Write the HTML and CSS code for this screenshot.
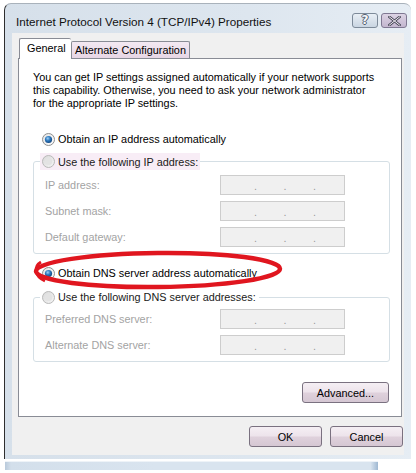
FILE: index.html
```html
<!DOCTYPE html>
<html>
<head>
<meta charset="utf-8">
<link rel="stylesheet" href="styles.css">
</head>
<body>
<svg class="defs" width="0" height="0" aria-hidden="true">
  <defs>
    <linearGradient id="rgOn" x1="0" y1="0" x2="1" y2="1">
      <stop offset="0" stop-color="#e4e4e4"/>
      <stop offset="1" stop-color="#fdfdfd"/>
    </linearGradient>
    <radialGradient id="dotOn" cx="0.4" cy="0.35" r="0.7">
      <stop offset="0" stop-color="#9fd0f5"/>
      <stop offset="0.45" stop-color="#2f7bc0"/>
      <stop offset="1" stop-color="#0d3f78"/>
    </radialGradient>
    <linearGradient id="rgOff" x1="0" y1="0" x2="1" y2="1">
      <stop offset="0" stop-color="#d8d8d8"/>
      <stop offset="1" stop-color="#f6f6f6"/>
    </linearGradient>
  </defs>
</svg>

<div class="window">
  <div class="titlebar">
    <span class="title">Internet Protocol Version 4 (TCP/IPv4) Properties</span>
    <div class="caption-btns">
      <span class="cbtn help">?</span>
      <span class="cbtn close">
        <svg width="13" height="10" viewBox="0 0 13 10"><path d="M1.5 1 L11.5 9 M11.5 1 L1.5 9" stroke="#4a4a5a" stroke-width="2.6" stroke-linecap="square"/><path d="M1.5 1 L11.5 9 M11.5 1 L1.5 9" stroke="#f4f0f6" stroke-width="1" stroke-linecap="square"/></svg>
      </span>
    </div>
  </div>

  <div class="client">
    <div class="tabs">
      <div class="tab active">General</div>
      <div class="tab">Alternate Configuration</div>
    </div>
    <div class="panel">
      <p class="intro">You can get IP settings assigned automatically if your network supports<br>this capability. Otherwise, you need to ask your network administrator<br>for the appropriate IP settings.</p>

      <div class="radio-row first">
        <svg class="radio" width="13" height="13" viewBox="0 0 13 13"><circle cx="6.5" cy="6.5" r="6" fill="url(#rgOn)" stroke="#8e8f8f"/><circle cx="6.5" cy="6.5" r="3.6" fill="url(#dotOn)"/></svg>
        <span>Obtain an IP address automatically</span>
      </div>

      <fieldset class="group ip-group">
        <legend class="radio-row legend hover">
          <svg class="radio" width="13" height="13" viewBox="0 0 13 13"><circle cx="6.5" cy="6.5" r="6" fill="url(#rgOff)" stroke="#b9b9b9"/><circle cx="6.5" cy="6.5" r="3.6" fill="#e3e3e3"/></svg>
          <span>Use the following IP address:</span>
        </legend>
        <div class="field">
          <span class="flabel">IP address:</span>
          <span class="ipbox"><span>.</span><span>.</span><span>.</span></span>
        </div>
        <div class="field">
          <span class="flabel">Subnet mask:</span>
          <span class="ipbox"><span>.</span><span>.</span><span>.</span></span>
        </div>
        <div class="field">
          <span class="flabel">Default gateway:</span>
          <span class="ipbox"><span>.</span><span>.</span><span>.</span></span>
        </div>
      </fieldset>

      <div class="radio-row dns-auto">
        <svg class="radio" width="13" height="13" viewBox="0 0 13 13"><circle cx="6.5" cy="6.5" r="6" fill="url(#rgOn)" stroke="#8e8f8f"/><circle cx="6.5" cy="6.5" r="3.6" fill="url(#dotOn)"/></svg>
        <span>Obtain DNS server address automatically</span>
      </div>

      <fieldset class="group dns-group">
        <legend class="radio-row legend">
          <svg class="radio" width="13" height="13" viewBox="0 0 13 13"><circle cx="6.5" cy="6.5" r="6" fill="url(#rgOff)" stroke="#b9b9b9"/><circle cx="6.5" cy="6.5" r="3.6" fill="#e3e3e3"/></svg>
          <span>Use the following DNS server addresses:</span>
        </legend>
        <div class="field">
          <span class="flabel">Preferred DNS server:</span>
          <span class="ipbox"><span>.</span><span>.</span><span>.</span></span>
        </div>
        <div class="field">
          <span class="flabel">Alternate DNS server:</span>
          <span class="ipbox"><span>.</span><span>.</span><span>.</span></span>
        </div>
      </fieldset>

      <div class="adv-row">
        <button class="btn adv">Advanced...</button>
      </div>
    </div>

    <div class="footer">
      <button class="btn">OK</button>
      <button class="btn">Cancel</button>
    </div>
  </div>
</div>
<div class="strip"></div>

<svg class="annotation" width="416" height="473" viewBox="0 0 416 473" aria-hidden="true">
  <ellipse cx="158" cy="270" rx="122" ry="17" fill="none" stroke="#e0161f" stroke-width="4.5" transform="rotate(-0.6 158 270)"/>
  <path d="M41 262 C 34 266, 34 276, 45 281" fill="none" stroke="#e0161f" stroke-width="3"/>
</svg>
</body>
</html>
```

FILE: styles.css
```css
html, body {
  margin: 0;
  padding: 0;
  background: #ffffff;
}

body {
  font-family: "Liberation Sans", Arial, sans-serif;
  font-size: 10.85px;
  color: #000;
  position: relative;
  width: 416px;
  height: 473px;
  overflow: hidden;
}

.defs {
  position: absolute;
}

.window {
  margin: 3px 0 0 4px;
  width: 392px;
  padding: 0 7px 4px 7px;
  background: linear-gradient(90deg, #d6e0ea 0%, #dde6ef 60%, #e6edf4 100%);
  border-left: 1px solid #2e2e2e;
  border-top: 1px solid #a9b2bb;
  border-radius: 7px 7px 0 0;
}

.titlebar {
  height: 29px;
  box-sizing: border-box;
  display: flex;
  align-items: flex-start;
  justify-content: space-between;
  padding-top: 9px;
}

.title {
  font-size: 11.7px;
  padding-left: 4px;
  margin-top: 2px;
  color: #111;
}

.caption-btns {
  display: flex;
  gap: 3px;
  margin-right: -3px;
}

.cbtn {
  height: 15px;
  width: 26px;
  box-sizing: border-box;
  border: 1px solid #7d8a99;
  border-radius: 3px;
  display: flex;
  align-items: center;
  justify-content: center;
}

.help {
  background: linear-gradient(#e9eff5, #c9d5e2);
  font-family: "DejaVu Sans", sans-serif;
  font-weight: bold;
  font-size: 12px;
  line-height: 13px;
  color: #f5f7fa;
  text-shadow: -1px 0 #556070, 1px 0 #556070, 0 -1px #556070, 0 1px #556070;
}

.close {
  background: linear-gradient(#dcd3e4, #c3b6cf);
  border-color: #7f7892;
}

.client {
  background: #f0f0f0;
  height: 422px;
  box-sizing: border-box;
  padding: 5px 2px 0 6px;
}

.tabs {
  display: flex;
  align-items: flex-end;
  height: 20px;
  padding-left: 1px;
}

.tab {
  box-sizing: border-box;
  height: 17px;
  line-height: 16px;
  padding: 0 3px;
  border: 1px solid #898c95;
  border-bottom: none;
  border-radius: 2px 2px 0 0;
  background: linear-gradient(#f3e9f2, #e7d6e5);
  white-space: nowrap;
}

.tab.active {
  position: relative;
  z-index: 1;
  height: 21px;
  margin-bottom: -1px;
  line-height: 19px;
  width: 52px;
  padding: 0 0 0 7px;
  background: #ffffff;
  border-right: none;
}

.panel {
  background: #ffffff;
  border: 1px solid #898c95;
  padding: 12px 11px 13px 14px;
}

.intro {
  margin: 0;
  line-height: 13px;
  white-space: nowrap;
}

.radio-row {
  display: flex;
  align-items: center;
  gap: 3px;
  height: 16px;
  white-space: nowrap;
}

.radio {
  flex: none;
}

.radio-row.first {
  margin-top: 21px;
  padding-left: 9px;
}

.dns-auto {
  margin-top: 11px;
  padding-left: 9px;
}

.group {
  margin: 6px 0 0 0;
  border: 1px solid #d5dfe5;
  border-radius: 3px;
  padding: 5px 11px 6px 11px;
  min-inline-size: 0;
}

.dns-group {
  margin-top: 8px;
  padding-top: 4px;
}

.legend {
  margin-left: -5px;
  padding: 0 3px 0 2px;
  color: #000;
}

.legend.hover {
  background: #f8edf6;
  width: 155px;
  height: 17px;
}

.legend span {
  color: #1a1a1a;
}

.field {
  display: flex;
  align-items: center;
  height: 20px;
  margin-bottom: 6px;
  color: #a3a3a3;
}

.field:last-child {
  margin-bottom: 0;
}

.flabel {
  width: 175px;
  flex: none;
}

.ipbox {
  width: 125px;
  height: 20px;
  box-sizing: border-box;
  border: 1px solid #cdcdcd;
  background: #f0f0f0;
  display: flex;
  padding-left: 33px;
  line-height: 20px;
  color: #9a9a9a;
}

.ipbox span {
  width: 29.5px;
  flex: none;
}

.adv-row {
  display: flex;
  justify-content: flex-end;
  margin-top: 20px;
  padding-right: 1px;
}

.btn {
  font-family: "Liberation Sans", Arial, sans-serif;
  font-size: 10.85px;
  color: #000;
  height: 21px;
  box-sizing: border-box;
  border: 1px solid #7a7180;
  border-radius: 3px;
  background: linear-gradient(#f5eff4 0%, #ede3eb 48%, #dfd1dc 52%, #d5c7d3 100%);
  padding: 0;
  width: 73px;
}

.btn.adv {
  width: 87px;
}

.footer {
  display: flex;
  justify-content: flex-end;
  gap: 8px;
  margin-top: 9px;
  margin-right: -1px;
}

.strip {
  margin: 2px 0 0 5px;
  width: 373px;
  height: 9px;
  background: linear-gradient(90deg, #b9cadb 0px, #d3dfeb 6px, #d9e4ef 40%, #d9e4ef 98%, #9fb8d2 100%);
  border-top: 1px solid #eef3f8;
  box-sizing: border-box;
}

.annotation {
  position: absolute;
  left: 0;
  top: 0;
  pointer-events: none;
}
```
